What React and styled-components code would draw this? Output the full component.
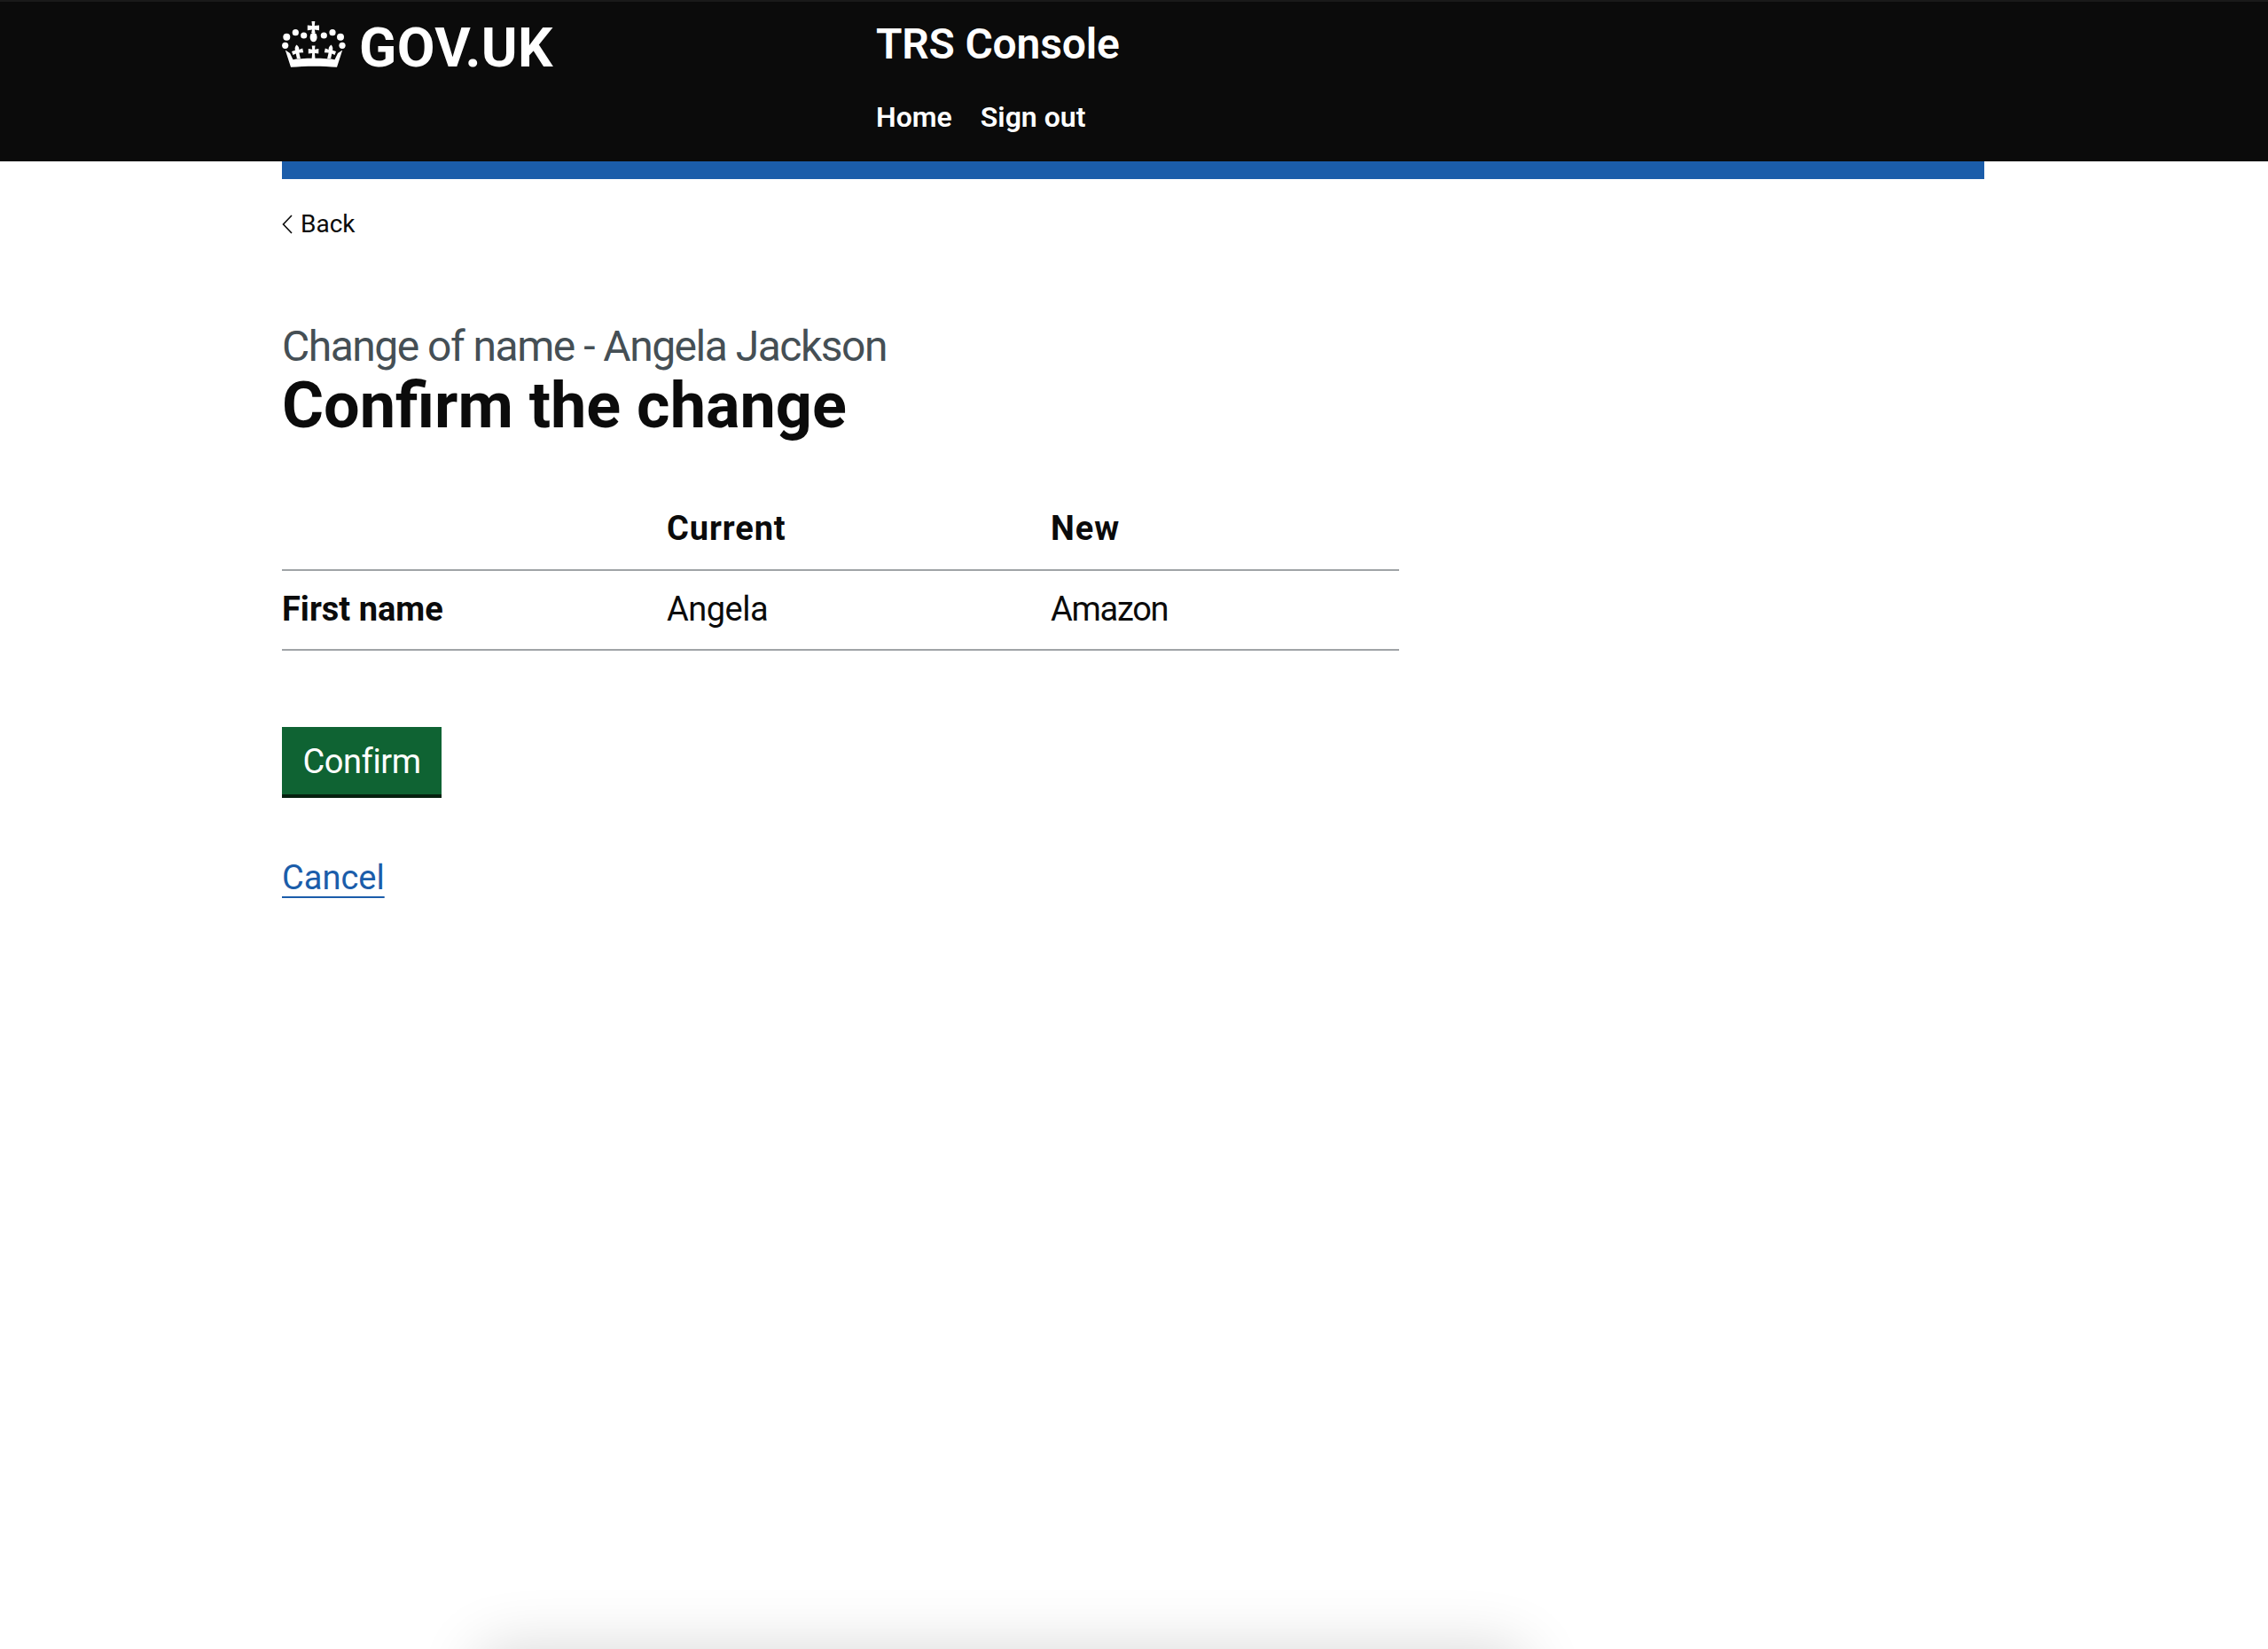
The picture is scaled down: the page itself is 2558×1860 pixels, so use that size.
import styled, { createGlobalStyle } from 'styled-components';

const GlobalStyle = createGlobalStyle`
  html, body {
    margin: 0;
    padding: 0;
    background: #fff;
    color: #0b0b0b;
    font-family: Roboto, "Liberation Sans", sans-serif;
  }
`;

const Page = styled.div`
  position: relative;
  width: 2558px;
  height: 1860px;
  overflow: hidden;
`;

const Header = styled.header`
  box-sizing: border-box;
  width: 2558px;
  height: 182px;
  background: #0b0b0b;
  border-top: 2px solid #1a1a1a;
`;

const Container = styled.div`
  width: 1920px;
  margin-left: 318px;
`;

const HeaderInner = styled(Container)`
  display: flex;
`;

const LogoLink = styled.a`
  display: flex;
  align-items: flex-start;
  width: 670px;
  padding-top: 22px;
  gap: 15px;
  color: #fff;
  text-decoration: none;
`;

const LogoText = styled.span`
  font-size: 62px;
  line-height: 60px;
  font-weight: 700;
  letter-spacing: 0.4px;
`;

const ServiceNav = styled.div`
  display: flex;
  flex-direction: column;
  padding-top: 20px;
`;

const ServiceName = styled.a`
  color: #fff;
  font-size: 48px;
  line-height: 56px;
  font-weight: 600;
  letter-spacing: -0.2px;
`;

const NavList = styled.nav`
  display: flex;
  gap: 32px;
  margin-top: 34px;
`;

const NavLink = styled.a`
  color: #fff;
  font-size: 32px;
  line-height: 40px;
  font-weight: 600;
`;

const BlueBar = styled(Container)`
  height: 20px;
  background: #1b5daa;
`;

const Main = styled(Container)`
  display: flex;
  flex-direction: column;
  align-items: flex-start;
`;

const BackLink = styled.a`
  display: flex;
  align-items: center;
  gap: 9px;
  margin-top: 33px;
  color: #0b0b0b;
  font-size: 28px;
  line-height: 36px;
`;

const Caption = styled.div`
  margin-top: 92px;
  color: #454f55;
  font-size: 48px;
  line-height: 56px;
  letter-spacing: -1.5px;
`;

const Title = styled.h1`
  margin: -1px 0 0;
  font-size: 72px;
  line-height: 80px;
  font-weight: 700;
`;

const ChangeTable = styled.table`
  width: 1260px;
  margin-top: 55px;
  border-collapse: collapse;
  table-layout: fixed;
  font-size: 38px;
  line-height: 48px;
`;

const Cell = styled.td`
  box-sizing: border-box;
  height: 90px;
  padding: 0 0 3px;
  border-bottom: 2px solid #a0a4a7;
  text-align: left;
  font-weight: ${(p) => (p.$bold ? 700 : 400)};
  width: ${(p) => p.$w || 'auto'};
  letter-spacing: ${(p) => p.$track || 0};
`;

const ConfirmButton = styled.button`
  box-sizing: border-box;
  width: 180px;
  height: 80px;
  margin-top: 86px;
  padding: 2px 0 0;
  border: 0;
  border-bottom: 4px solid #06200f;
  background: #0f6333;
  color: #fff;
  font-family: inherit;
  font-size: 38px;
  letter-spacing: -0.4px;
`;

const CancelLink = styled.a`
  margin-top: 66px;
  color: #1b5daa;
  font-size: 38px;
  line-height: 48px;
  text-decoration: underline;
  text-decoration-thickness: 2px;
  text-underline-offset: 8px;
`;

// dialog edge poking up from under the bottom of the window
const BottomShadow = styled.div`
  position: absolute;
  left: 540px;
  top: 1860px;
  width: 1180px;
  height: 100px;
  border-radius: 20px;
  box-shadow: 0 0 70px rgba(0, 0, 0, 0.16);
`;

const Crown = () => (
  <svg width="72" height="52" viewBox="0 0 72 52" fill="#fff" aria-hidden="true">
    <circle cx="5.3" cy="17.7" r="4" />
    <circle cx="15.3" cy="12.7" r="3.6" />
    <circle cx="24.7" cy="16" r="3.6" />
    <circle cx="47.3" cy="16" r="3.6" />
    <circle cx="57" cy="12.7" r="3.6" />
    <circle cx="66" cy="17.7" r="4" />
    <circle cx="3.7" cy="27.3" r="3.6" />
    <circle cx="68" cy="27.3" r="3.6" />
    <path d="M33.500 0h3.800l-.5 5 5.200-.6v5.800l-5.200-.6.8 3.400h-4.400l.8-3.400-5.200.6V4.400l5.200.6z" />
    <ellipse cx="35.600" cy="18" rx="4" ry="5.200" />
    <path d="M33.700 27.500h3.800l-.5 4.200 4.400-.7-.1 5.600-4.300-.7.5 6.600h-3.900l.5-6.600-4.300.7V31l4.400.7z" />
    <path d="M16.500 26.500c2 1.400 3.200 3.400 2.800 5.500l3.900-1.500 1 4.700-4.800.4 1.500 6.400h-4l-1.200-5.400-3.200 1.400-1.500-4 3.900-1.200c-.6-2.300-.2-4.400 1.600-6.300z" />
    <path d="M55.500 26.500c-2 1.400-3.200 3.400-2.800 5.500l-3.900-1.500-1 4.700 4.800.4-1.500 6.400h4l1.200-5.400 3.200 1.400 1.500-4-3.900-1.200c.6-2.300.2-4.400-1.600-6.300z" />
    <path d="M3.800 32.500l5.200 3.600 3.500 7.200c7-2 40-2 47 0l3.500-7.200 5.200-3.600-6.200 19.300c-15-1.500-36-1.500-52 0z" />
  </svg>
);

const Chevron = () => (
  <svg width="12" height="22" viewBox="0 0 12 22" fill="none" stroke="#0b0b0b" strokeWidth="1.6" aria-hidden="true">
    <path d="M11 1L1.500 11l9.500 10" />
  </svg>
);

export default function App() {
  return (
    <Page>
      <GlobalStyle />
      <Header>
        <HeaderInner>
          <LogoLink>
            <Crown />
            <LogoText>GOV.UK</LogoText>
          </LogoLink>
          <ServiceNav>
            <ServiceName>TRS Console</ServiceName>
            <NavList>
              <NavLink>Home</NavLink>
              <NavLink>Sign out</NavLink>
            </NavList>
          </ServiceNav>
        </HeaderInner>
      </Header>
      <BlueBar />
      <Main>
        <BackLink>
          <Chevron />
          Back
        </BackLink>
        <Caption>Change of name - Angela Jackson</Caption>
        <Title>Confirm the change</Title>
        <ChangeTable>
          <tbody>
            <tr>
              <Cell as="th" $w="434px" />
              <Cell as="th" $w="433px" $bold $track="0.9px">Current</Cell>
              <Cell as="th" $bold $track="1px">New</Cell>
            </tr>
            <tr>
              <Cell $bold>First name</Cell>
              <Cell $track="-0.5px">Angela</Cell>
              <Cell $track="-1.3px">Amazon</Cell>
            </tr>
          </tbody>
        </ChangeTable>
        <ConfirmButton>Confirm</ConfirmButton>
        <CancelLink>Cancel</CancelLink>
      </Main>
      <BottomShadow />
    </Page>
  );
}
